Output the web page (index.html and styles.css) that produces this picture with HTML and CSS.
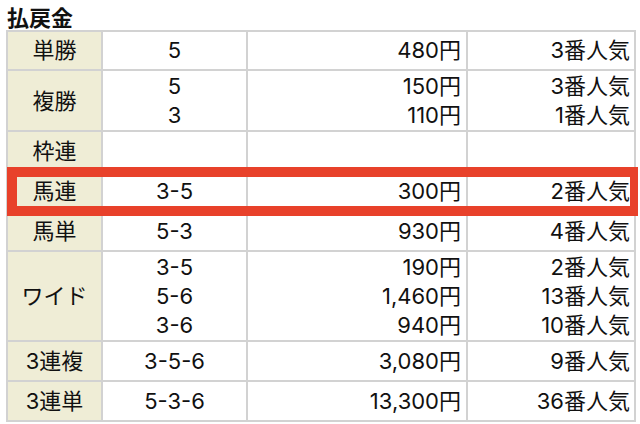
FILE: index.html
```html
<!DOCTYPE html>
<html lang="ja">
<head>
<meta charset="utf-8">
<title>払戻金</title>
<link rel="stylesheet" href="styles.css">
</head>
<body>
<h2 class="title">払戻金</h2>
<div class="wrap">
  <table class="payout">
    <colgroup>
      <col class="c1"><col class="c2"><col class="c3"><col class="c4">
    </colgroup>
    <tr class="single first"><th>単勝</th><td class="num">5</td><td class="yen">480円</td><td class="pop">3番人気</td></tr>
    <tr class="multi"><th>複勝</th><td class="num">5<br>3</td><td class="yen">150円<br>110円</td><td class="pop">3番人気<br>1番人気</td></tr>
    <tr class="single"><th>枠連</th><td class="num"></td><td class="yen"></td><td class="pop"></td></tr>
    <tr class="single"><th>馬連</th><td class="num">3-5</td><td class="yen">300円</td><td class="pop">2番人気</td></tr>
    <tr class="single"><th>馬単</th><td class="num">5-3</td><td class="yen">930円</td><td class="pop">4番人気</td></tr>
    <tr class="multi"><th>ワイド</th><td class="num">3-5<br>5-6<br>3-6</td><td class="yen">190円<br>1,460円<br>940円</td><td class="pop">2番人気<br>13番人気<br>10番人気</td></tr>
    <tr class="single"><th>3連複</th><td class="num">3-5-6</td><td class="yen">3,080円</td><td class="pop">9番人気</td></tr>
    <tr class="single"><th>3連単</th><td class="num">5-3-6</td><td class="yen">13,300円</td><td class="pop">36番人気</td></tr>
  </table>
  <div class="highlight"></div>
</div>
</body>
</html>
```
FILE: styles.css
```css
html, body {
  margin: 0;
  padding: 0;
  background: #ffffff;
}
body {
  font-family: Inter, "Noto Sans CJK JP", sans-serif;
  color: #111111;
  width: 640px;
  height: 424px;
  overflow: hidden;
}
.title {
  margin: 0;
  padding: 6px 0 0 7px;
  height: 24px;
  line-height: 24px;
  font-size: 22px;
  font-weight: bold;
}
.wrap {
  position: relative;
}
.payout {
  margin-left: 6px;
  border-collapse: separate;
  border-spacing: 0;
  table-layout: fixed;
  width: 630px;
  border-top: 2px solid #d2d2d2;
  border-left: 2px solid #d2d2d2;
  font-size: 22px;
  line-height: 29px;
}
.c1 { width: 95px; }
.c2 { width: 145px; }
.c3 { width: 220px; }
.c4 { width: 168px; }
.payout th,
.payout td {
  border-right: 2px solid #d2d2d2;
  border-bottom: 2px solid #d2d2d2;
  vertical-align: middle;
  font-weight: normal;
  white-space: nowrap;
}
.payout th {
  background: #efedd6;
  text-align: center;
  padding-left: 0;
  padding-right: 0;
}
.single th, .single td {
  padding-top: 5px;
  padding-bottom: 4px;
}
.first th, .first td {
  padding-top: 4px;
}
.multi th, .multi td {
  padding-top: 1px;
  padding-bottom: 0;
}
.num {
  text-align: center;
}
.yen {
  text-align: right;
  padding-right: 5px;
}
.pop {
  text-align: right;
  padding-right: 4px;
}
.highlight {
  position: absolute;
  left: 7px;
  top: 137px;
  width: 613px;
  height: 29px;
  border-style: solid;
  border-color: #e8412a;
  border-width: 10px 8px 10px 10px;
}
```
